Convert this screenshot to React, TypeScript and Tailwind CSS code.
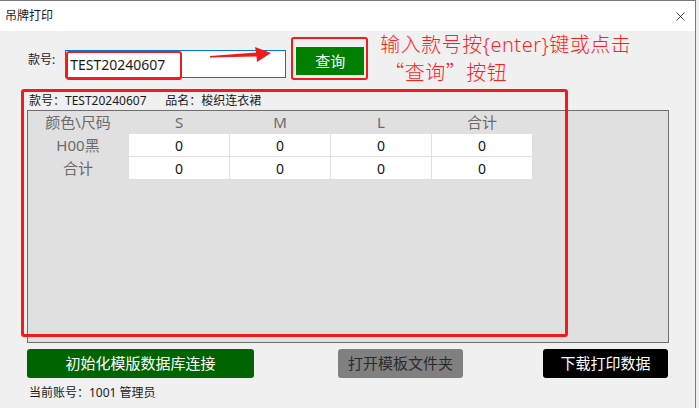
import { X } from 'lucide-react';

const sizes = ['S', 'M', 'L', '合计'];
const rows = [
  { name: 'H00黑', values: ['0', '0', '0', '0'] },
  { name: '合计', values: ['0', '0', '0', '0'] },
];

export default function App() {
  return (
    <div
      className="relative w-[699px] h-[408px] overflow-hidden bg-[#f0f0f0] text-[#1a1a1a]"
      style={{ fontFamily: '"Noto Sans", "Noto Sans CJK SC", sans-serif' }}
    >
      <div className="w-[696px] h-[408px] border-t border-r border-[#7a7a7a] bg-[#f0f0f0]">
        {/* title bar */}
        <div className="h-[30px] bg-white flex items-center justify-between pl-[5px] pr-[7px]">
          <span className="text-[12px] leading-none">吊牌打印</span>
          <X className="w-[15px] h-[15px] text-[#111]" strokeWidth={1.2} />
        </div>

        <div className="px-[27px]">
          {/* search row */}
          <div className="flex items-start h-[58px]">
            <span className="mt-[23px] ml-[1px] text-[12px] leading-none">款号:</span>
            <div className="ml-[10px] mt-[19px] w-[221px] h-[28px] bg-white border border-[#0078d7] flex items-center pl-[4px] text-[14px]">
              TEST20240607
            </div>
            <button className="ml-[10px] mt-[16px] w-[68px] h-[28px] bg-[#008000] text-white text-[15px] flex items-center justify-center">
              查询
            </button>
            <div className="ml-[16px] mt-[0px] text-[20px] leading-[27px] tracking-[0.5px] font-light text-[#ff1f1f] whitespace-nowrap">
              <div>输入款号按{'{'}enter{'}'}键或点击</div>
              <div className="ml-[4px]" style={{ fontFamily: '"Noto Sans CJK SC", sans-serif' }}>
                “查询”按钮
              </div>
            </div>
          </div>

          {/* info line */}
          <div className="mt-[3px] ml-[2px] text-[12px] leading-[18px] whitespace-pre">
            款号：TEST20240607      品名：梭织连衣裙
          </div>

          {/* grid panel */}
          <div className="w-[642px] h-[233px] bg-[#e0e0e0] border border-[#6e6e6e]">
            <div className="grid grid-cols-[100px_100px_100px_100px_100px] gap-x-[1px] gap-y-[1px] pt-[1px]">
              <div className="h-[21px] flex items-center justify-center text-[15px] text-[#6b6b6b]">颜色\尺码</div>
              {sizes.map((s) => (
                <div key={s} className="h-[21px] flex items-center justify-center text-[15px] text-[#6b6b6b]">
                  {s}
                </div>
              ))}
              {rows.map((r) => (
                <>
                  <div key={r.name} className="h-[22px] flex items-center justify-center text-[15px] text-[#6b6b6b]">
                    {r.name}
                  </div>
                  {r.values.map((v, i) => (
                    <div key={r.name + i} className="h-[22px] bg-white flex items-center justify-center text-[14px] text-[#111]">
                      {v}
                    </div>
                  ))}
                </>
              ))}
            </div>
          </div>

          {/* action buttons */}
          <div className="mt-[6px] flex items-center">
            <button className="w-[227px] h-[29px] rounded-[3px] bg-[#006400] text-white text-[15px] flex items-center justify-center">
              初始化模版数据库连接
            </button>
            <button className="ml-[84px] w-[125px] h-[29px] rounded-[3px] bg-[#808080] text-[#2a2a2a] text-[15px] flex items-center justify-center">
              打开模板文件夹
            </button>
            <button className="ml-[80px] w-[125px] h-[29px] rounded-[3px] bg-black text-white text-[15px] flex items-center justify-center">
              下载打印数据
            </button>
          </div>

          <div className="mt-[7px] ml-[2px] text-[12px] leading-[16px]">当前账号：1001 管理员</div>
        </div>
      </div>

      {/* annotations */}
      <div className="absolute left-[66px] top-[51px] w-[116px] h-[29px] border-2 border-[#f21b1b] rounded-[3px]" />
      <div className="absolute left-[291px] top-[37px] w-[77px] h-[43px] border-2 border-[#f21b1b] rounded-[3px]" />
      <div className="absolute left-[21px] top-[89px] w-[547px] h-[248px] border-[3px] border-[#f21b1b] rounded-[3px]" />
      <svg className="absolute left-[208px] top-[44px]" width="66" height="22" viewBox="0 0 66 22">
        <polygon points="2,12 48,8.5 47,3 63,9 49,18 48.5,12.5 2,13.5" fill="#f21b1b" />
      </svg>
    </div>
  );
}
